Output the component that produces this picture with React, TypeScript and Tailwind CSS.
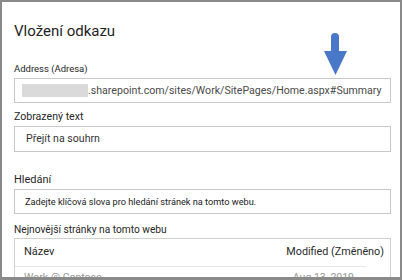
export default function App() {
  return (
    <div
      className="relative w-[402px] h-[280px] overflow-hidden bg-white border-t-2 border-l-2 border-r-2 border-b-[3px] border-[#8a8a8a] box-border"
      style={{ fontFamily: 'Roboto, "Open Sans", sans-serif' }}
    >
      <div className="flex flex-col pl-[12px] pr-[9px] pt-[19px] text-[#222]">
        <h1 className="text-[15px] leading-[20px] font-normal text-[#1f1f1f]">Vložení odkazu</h1>

        <label className="mt-[22px] text-[9.5px] leading-[12px] text-[#262626]">Address (Adresa)</label>
        <div className="mt-[3px] h-[25px] border border-[#c8c8c8] flex items-center pl-[7px]">
          <span className="shrink-0 w-[66px] h-[13px] bg-[#dadada]" />
          <span className="whitespace-nowrap text-[10.6px] text-[#4a4a4a]">.sharepoint.com/sites/Work/SitePages/Home.aspx#Summary</span>
        </div>

        <label className="mt-[7px] text-[10.6px] leading-[13px] text-[#262626]">Zobrazený text</label>
        <div className="mt-[3px] h-[26px] border border-[#c8c8c8] flex items-center pl-[11px]">
          <span className="text-[10.6px] text-[#333]">Přejít na souhrn</span>
        </div>

        <label className="mt-[21px] text-[11px] leading-[14px] text-[#262626]">Hledání</label>
        <div className="mt-[2px] h-[25px] border border-[#c8c8c8] flex items-center pl-[10px]">
          <span className="text-[9.2px] text-[#222]">Zadejte klíčová slova pro hledání stránek na tomto webu.</span>
        </div>

        <label className="mt-[9px] text-[10.2px] leading-[13px] text-[#262626]">Nejnovější stránky na tomto webu</label>
        <div className="mt-[2px] border border-[#d0d0d0] flex flex-col">
          <div className="h-[27px] flex items-center justify-between pl-[9px] pr-[6px] text-[11px] text-[#2a2a2a]">
            <span>Název</span>
            <span className="text-[10.8px]">Modified (Změněno)</span>
          </div>
          <div className="h-px bg-[#e6e6e6] mr-[24px]" />
          <div className="h-[22px] flex items-center justify-between pl-[9px] pr-[36px] text-[10.5px] text-[#999]">
            <span>Work @ Contoso</span>
            <span>Aug 13, 2019</span>
          </div>
        </div>
      </div>

      <svg className="absolute left-[320px] top-[29px]" width="26" height="46" viewBox="0 0 26 46">
        <path d="M9 6 a4 4 0 0 1 8 0 V20 H25 L13.5 44 L2 20 H9 Z" fill="#4a78c8" />
      </svg>
    </div>
  );
}
